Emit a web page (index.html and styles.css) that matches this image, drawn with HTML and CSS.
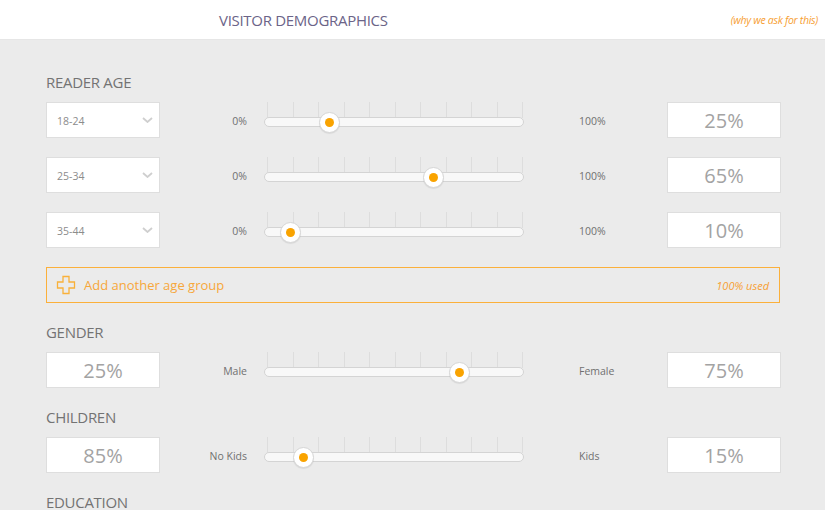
FILE: index.html
```html
<!DOCTYPE html>
<html>
<head>
<meta charset="utf-8">
<link rel="stylesheet" href="styles.css">
</head>
<body>
<header class="topbar">
  <h1 class="title">VISITOR DEMOGRAPHICS</h1>
  <a class="why">(why we ask for this)</a>
</header>
<main class="panel">
  <h2 class="section">READER AGE</h2>
  <div class="row">
    <div class="select"><span>18-24</span><svg class="chev" width="11" height="6" viewBox="0 0 11 6"><path d="M1 1 L5.5 5 L10 1" fill="none" stroke="#cfcfcf" stroke-width="1.8"/></svg></div>
    <div class="lab-l">0%</div>
    <div class="slider"><div class="ticks"><i></i><i></i><i></i><i></i><i></i><i></i><i></i><i></i><i></i><i></i><i></i></div><div class="track"></div><div class="thumb" style="left:25%"></div></div>
    <div class="lab-r">100%</div>
    <div class="value">25%</div>
  </div>
  <div class="row">
    <div class="select"><span>25-34</span><svg class="chev" width="11" height="6" viewBox="0 0 11 6"><path d="M1 1 L5.5 5 L10 1" fill="none" stroke="#cfcfcf" stroke-width="1.8"/></svg></div>
    <div class="lab-l">0%</div>
    <div class="slider"><div class="ticks"><i></i><i></i><i></i><i></i><i></i><i></i><i></i><i></i><i></i><i></i><i></i></div><div class="track"></div><div class="thumb" style="left:65%"></div></div>
    <div class="lab-r">100%</div>
    <div class="value">65%</div>
  </div>
  <div class="row">
    <div class="select"><span>35-44</span><svg class="chev" width="11" height="6" viewBox="0 0 11 6"><path d="M1 1 L5.5 5 L10 1" fill="none" stroke="#cfcfcf" stroke-width="1.8"/></svg></div>
    <div class="lab-l">0%</div>
    <div class="slider"><div class="ticks"><i></i><i></i><i></i><i></i><i></i><i></i><i></i><i></i><i></i><i></i><i></i></div><div class="track"></div><div class="thumb" style="left:10%"></div></div>
    <div class="lab-r">100%</div>
    <div class="value">10%</div>
  </div>
  <div class="add">
    <svg class="plus" width="20" height="20" viewBox="0 0 20 20"><path d="M7 1.5 H13 V7 H18.5 V13 H13 V18.5 H7 V13 H1.5 V7 H7 Z" fill="none" stroke="#f9b13a" stroke-width="1.3"/></svg>
    <span class="add-text">Add another age group</span>
    <span class="used">100% used</span>
  </div>

  <h2 class="section">GENDER</h2>
  <div class="row">
    <div class="value">25%</div>
    <div class="lab-l">Male</div>
    <div class="slider"><div class="ticks"><i></i><i></i><i></i><i></i><i></i><i></i><i></i><i></i><i></i><i></i><i></i></div><div class="track"></div><div class="thumb" style="left:75%"></div></div>
    <div class="lab-r">Female</div>
    <div class="value">75%</div>
  </div>

  <h2 class="section">CHILDREN</h2>
  <div class="row">
    <div class="value">85%</div>
    <div class="lab-l">No Kids</div>
    <div class="slider"><div class="ticks"><i></i><i></i><i></i><i></i><i></i><i></i><i></i><i></i><i></i><i></i><i></i></div><div class="track"></div><div class="thumb" style="left:15%"></div></div>
    <div class="lab-r">Kids</div>
    <div class="value">15%</div>
  </div>

  <h2 class="section">EDUCATION</h2>
</main>
</body>
</html>
```
FILE: styles.css
```css
* { box-sizing: border-box; }
html, body { margin: 0; padding: 0; }
body {
  font-family: "Open Sans", "Liberation Sans", sans-serif;
  background: #ebebeb;
  width: 825px;
  height: 510px;
  overflow: hidden;
}
.topbar {
  height: 40px;
  background: #fff;
  display: flex;
  align-items: center;
  padding-left: 219px;
  padding-right: 7px;
  border-bottom: 1px solid #e6e6e6;
}
.title {
  margin: 0;
  font-size: 15px;
  font-weight: 400;
  color: #6b6488;
  letter-spacing: -0.3px;
  flex: 1;
}
.why {
  font-size: 10.5px;
  font-style: italic;
  color: #f7a033;
  letter-spacing: -0.3px;
}
.panel {
  padding: 32px 45px 0 46px;
}
.section {
  margin: 0 0 10px 0;
  font-size: 15px;
  line-height: 20px;
  font-weight: 400;
  color: #737373;
  letter-spacing: -0.3px;
}
.row {
  display: grid;
  grid-template-columns: 114px 104px 260px 143px 114px;
  height: 36px;
  margin-bottom: 19px;
  align-items: center;
}
.select {
  height: 36px;
  background: #fff;
  border: 1px solid #dedede;
  display: flex;
  align-items: center;
  justify-content: space-between;
  padding: 0 6px 0 10px;
  font-size: 10.5px;
  color: #8c8c8c;
}
.select span { margin-top: 1px; }
.chev { display: block; }
.lab-l {
  text-align: right;
  padding-right: 17px;
  font-size: 10.5px;
  color: #707070;
  padding-top: 2px;
}
.lab-r {
  padding-left: 55px;
  font-size: 10.5px;
  color: #707070;
  padding-top: 2px;
}
.value {
  height: 36px;
  background: #fff;
  border: 1px solid #dedede;
  display: flex;
  align-items: center;
  justify-content: center;
  font-size: 20px;
  font-weight: 400;
  color: #a3a3a3;
}
.slider {
  position: relative;
  height: 36px;
}
.ticks {
  position: absolute;
  left: 3px;
  right: 1px;
  top: 0;
  height: 16px;
  display: flex;
  justify-content: space-between;
}
.ticks i {
  display: block;
  width: 1px;
  height: 16px;
  background: #dddddd;
}
.track {
  position: absolute;
  left: 0;
  right: 0;
  top: 15px;
  height: 10px;
  background: #f8f8f8;
  border: 1px solid #d4d4d4;
  border-radius: 5px;
}
.thumb {
  position: absolute;
  top: 10px;
  width: 21px;
  height: 21px;
  margin-left: -10px;
  border-radius: 50%;
  background: #fff;
  border: 1px solid #d6d6d6;
  box-shadow: 0 1px 1px rgba(0,0,0,0.08);
}
.thumb::after {
  content: "";
  position: absolute;
  left: 5px;
  top: 5px;
  width: 9px;
  height: 9px;
  border-radius: 50%;
  background: #f9a300;
}
.add {
  height: 36px;
  border: 1px solid #fbb03b;
  display: flex;
  align-items: center;
  padding: 0 10px 0 9px;
  margin-bottom: 19px;
}
.plus { display: block; margin-right: 8px; }
.add-text {
  flex: 1;
  font-size: 13px;
  color: #f7a73a;
}
.used {
  font-size: 11px;
  font-style: italic;
  color: #f7a033;
}
```
